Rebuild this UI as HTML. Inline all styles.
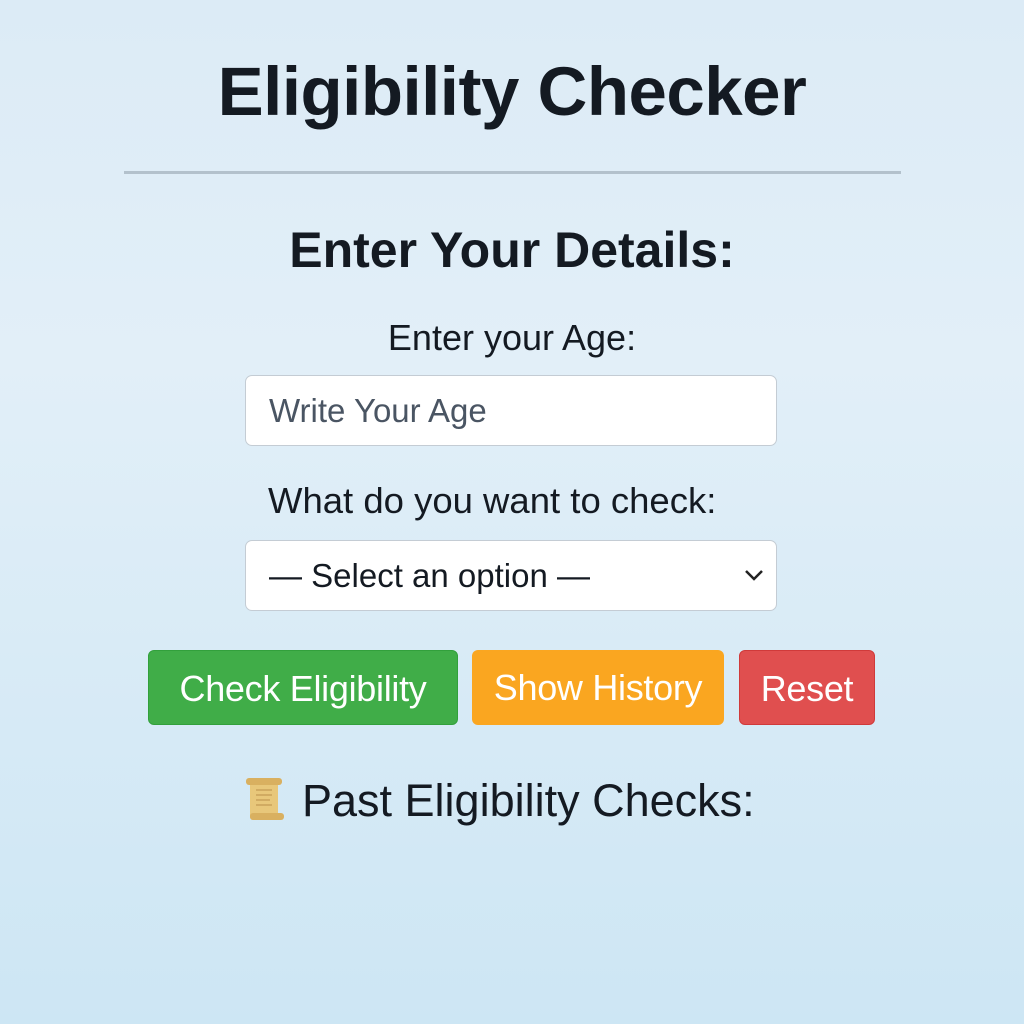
<!DOCTYPE html>
<html><head><style>
body{margin:0;width:1024px;height:1024px;overflow:hidden;background:linear-gradient(180deg,#dcebf6 0%,#e2eff8 35%,#cde6f4 100%);font-family:"Liberation Sans",sans-serif;color:#141a22;position:relative}
.a{position:absolute}
h1{position:absolute;left:0;width:1024px;top:50px;margin:0;text-align:center;font-size:69px;font-weight:bold;line-height:84px;letter-spacing:-0.5px}
.hr{left:124px;top:171px;width:777px;height:3px;background:#b3c1cc}
.t{left:0;width:1024px;text-align:center}
.box{left:245px;width:532px;height:71px;background:#fff;border:1px solid #c4ccd4;border-radius:7px;box-sizing:border-box;font-size:33px;line-height:69px;padding-left:23px}
.btn{top:650px;height:75px;border-radius:6px;color:#fff;font-size:36px;line-height:75px;text-align:center;box-sizing:border-box;letter-spacing:-0.3px}
</style></head><body>
<h1>Eligibility Checker</h1>
<div class="a hr"></div>
<div class="a t" style="top:222px;font-size:50px;font-weight:bold;line-height:56px">Enter Your Details:</div>
<div class="a t" style="top:317px;font-size:36px;line-height:42px">Enter your Age:</div>
<div class="a box" style="top:375px;color:#4a5563">Write Your Age</div>
<div class="a" style="left:268px;top:480px;font-size:36.5px;line-height:42px">What do you want to check:</div>
<div class="a box" style="top:540px;color:#141a22">— Select an option —
<svg class="a" style="right:12px;top:27px" width="20" height="14" viewBox="0 0 20 14"><path d="M2 3l8 8 8-8" fill="none" stroke="#222" stroke-width="2.5"/></svg></div>
<div class="a btn" style="left:148px;width:310px;background:#40ad48;border:1px solid #32a03c">Check Eligibility</div>
<div class="a btn" style="left:472px;width:252px;background:#faa620">Show History</div>
<div class="a btn" style="left:739px;width:136px;background:#e04f4f;border:1px solid #d03a3a">Reset</div>
<svg class="a" style="left:244px;top:776px" width="42" height="46" viewBox="0 0 42 46"><rect x="6" y="2" width="28" height="42" rx="3" fill="#e8c77a"/><rect x="2" y="2" width="36" height="7" rx="3" fill="#d9b060"/><rect x="6" y="37" width="34" height="7" rx="3" fill="#d9b060"/><path d="M12 14h16M12 19h16M12 24h14M12 29h16" stroke="#c9a25a" stroke-width="1.5"/></svg>
<div class="a" style="left:302px;top:776px;font-size:45px;line-height:50px">Past Eligibility Checks:</div>
</body></html>
